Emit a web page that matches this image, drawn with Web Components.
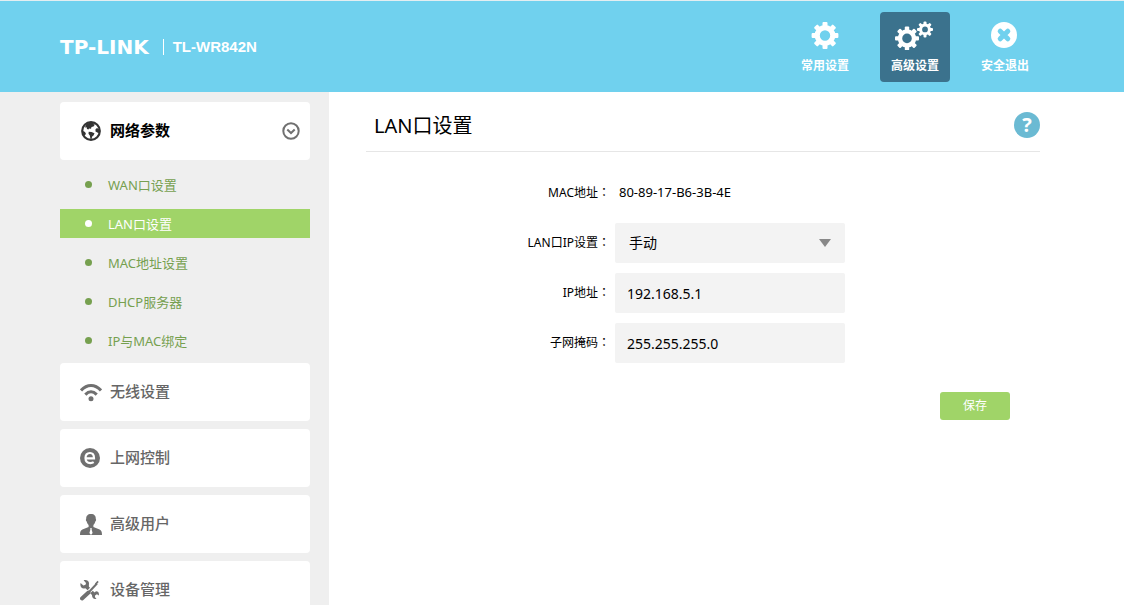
<!DOCTYPE html>
<html lang="zh-CN">
<head>
<meta charset="utf-8">
<title>TL-WR842N</title>
<style>
  html, body { margin: 0; min-height: 100%; }
  body {
    --blue: #70d1ee;
    --green: #a0d468;
    font: 12px/20px "Noto Sans", "Noto Sans CJK SC", sans-serif;
    color: #000;
    background: #fff;
  }
</style>
</head>
<body>
<router-app></router-app>

<script>
const gear = (cx, cy, outer, body, hole, tooth) => {
  const ring = (body + hole) / 2;
  const teeth = [0, 45, 90, 135, 180, 225, 270, 315].map(a =>
    `<rect x="${cx - tooth / 2}" y="${cy - outer}" width="${tooth}" height="${outer - ring}" rx="1" fill="currentColor" transform="rotate(${a} ${cx} ${cy})"/>`).join('');
  return `<circle cx="${cx}" cy="${cy}" r="${ring}" fill="none" stroke="currentColor" stroke-width="${body - hole}"/>${teeth}`;
};

const ICONS = {
  gear: [40, 30, gear(20, 15.5, 13.4, 10.4, 5.2, 5)],
  gears: [40, 30, gear(12, 18.4, 12, 9.2, 4.8, 4.4) + gear(30, 9.4, 8, 5.9, 2.9, 3)],
  exit: [40, 30, '<circle cx="19" cy="15" r="13" fill="currentColor"/><path d="M15.2 11.2l7.6 7.6M22.8 11.2l-7.6 7.6" stroke="#70d1ee" stroke-width="5" stroke-linecap="round"/>'],
  globe: [22, 22, '<circle cx="11" cy="11" r="8.8" fill="none" stroke="currentColor" stroke-width="2.2"/><path fill="currentColor" d="M6 4.500L9.500 2.500H14L13.600 4.200 15 4.600 13.500 6.600 11.500 7 11 8.800 9 8.500 8.500 9.600 7 9 6.600 7.200 5 7.400ZM15.500 9.200L17 8 19.500 9.500V13L17.800 12.800 15.500 11.500ZM3 11L5 12 6 14 4.500 15.500 2.500 13ZM8.700 11.800L11.500 12 14.500 13.200 13.500 15.500 12.200 16.500 11.500 19 10.500 19 9.800 15.500 8.500 13.800Z"/>'],
  wifi: [22, 22, '<g fill="none" stroke="currentColor" stroke-width="3"><path d="M1 9.5C7 2.8 15 2.8 21 9.5"/><path d="M5.3 13.6C9 9.8 13 9.8 16.7 13.6"/></g><circle cx="11" cy="17.8" r="2.5" fill="currentColor"/>'],
  web: [22, 22, '<circle cx="10" cy="11" r="10" fill="currentColor"/><path d="M5.5 11.3H14C14 7.8 12.4 6 10 6C7.3 6 5.5 8 5.5 11.1C5.5 14.3 7.4 16.1 10.4 16.1C11.7 16.1 12.8 15.8 13.7 15.2" fill="none" stroke="#fff" stroke-width="2.2"/>'],
  user: [22, 22, '<path fill="currentColor" d="M11 1C7.7 1 6 3 6.2 6C5.6 6.4 5.9 8.3 6.7 8.6C7 10.2 7.7 11.3 8.6 12V14L2.4 16.6C.8 17.3 0 18.6 0 22H22C22 18.6 21.2 17.3 19.6 16.6L13.4 14V12C14.3 11.3 15 10.2 15.3 8.6C16.1 8.3 16.4 6.4 15.8 6C16 3 14.3 1 11 1Z"/><path fill="#fff" d="M10 15.2h2l-.4 1.4 1 3.4-1.6 2-1.6-2 1-3.4z"/>'],
  tools: [22, 22, '<g fill="none" stroke="currentColor"><path d="M5 6.500L8.800 10M11.500 13L15 16.500" stroke-width="3.600"/><path d="M2 19.500L8.500 13.500" stroke-width="4" stroke-linecap="round"/><path d="M8.500 13.500L17 4.500" stroke-width="2"/></g><path fill="currentColor" d="M15 4.600L17.500 1.800l1.200 1.200-2.700 3zM3.600 1.300L6 3.900 5.600 5.800 3.400 6.400.6 3.900C-.3 7.800 1.600 9.600 4.200 9.400L8.800 8.200 9 4C8.800 1.800 6.200.4 3.600 1.300ZM12 15.500l4-3.300c2.500 0 3.400 2.200 2.700 4.300L17 15.300l-1.800.700-.3 2 1.600 1.900c-2.700.8-4.700-1.200-4.500-4.400Z"/>'],
};

const svg = name => {
  const [w, h, body] = ICONS[name];
  return `<svg width="${w}" height="${h}" viewBox="0 0 ${w} ${h}" aria-hidden="true">${body}</svg>`;
};

const define = (name, render) => customElements.define(name, class extends HTMLElement {
  connectedCallback() {
    if (this.shadowRoot) return;
    this.attachShadow({ mode: 'open', delegatesFocus: name === 'form-row' }).innerHTML = render(this);
  }
});

define('top-link', el => `
  <style>
    :host { display: block; }
    a {
      box-sizing: border-box; width: 70px; height: 70px; padding-top: 8px;
      display: flex; flex-direction: column; align-items: center; gap: 6px;
      border-radius: 4px; color: #fff; text-decoration: none;
      font-weight: bold; line-height: 20px;
    }
    :host([active]) a { background: #3b728d; }
    svg { display: block; }
  </style>
  <a href="#">${svg(el.getAttribute('icon'))}<slot></slot></a>`);

define('app-header', () => `
  <style>
    :host {
      display: flex; justify-content: space-between; align-items: center;
      box-sizing: border-box; height: 92px; padding: 0 84px 0 60px;
      border-top: 1px solid #e4eef1; background: var(--blue); color: #fff;
    }
    .brand { display: flex; align-items: center; gap: 14px; }
    .logo { font: bold 20px/20px "DejaVu Sans", sans-serif; }
    .model {
      padding-left: 9px; border-left: 1px solid #fff;
      font: bold 15px/16px "Liberation Sans", sans-serif;
    }
    nav { display: flex; gap: 20px; }
  </style>
  <div class="brand"><span class="logo">TP-LINK</span><span class="model">TL-WR842N</span></div>
  <nav><slot></slot></nav>`);

define('menu-card', el => `
  <style>
    :host { display: block; }
    button {
      box-sizing: border-box; width: 100%; height: 58px; padding: 0 10px 0 20px;
      display: flex; align-items: center; gap: 8px;
      border: 0; border-radius: 4px; background: #fff; color: #666;
      font: 500 15px/20px "Noto Sans", "Noto Sans CJK SC", sans-serif; text-align: left;
    }
    :host([open]) button { color: #000; font-weight: bold; }
    .icon { color: #707070; display: flex; }
    :host([open]) .icon { color: #333; }
    svg { display: block; }
    .label { flex: 1; padding-bottom: 2px; }
  </style>
  <button type="button" aria-expanded="${el.hasAttribute('open')}">
    <span class="icon">${svg(el.getAttribute('icon'))}</span>
    <span class="label"><slot></slot></span>
    ${el.hasAttribute('open') ? '<svg width="18" height="18" viewBox="0 0 18 18" fill="none" stroke="#707070" stroke-width="2" aria-hidden="true"><circle cx="9" cy="9" r="7.7"/><path d="M5.300 7.500L9 11l3.700-3.500"/></svg>' : ''}
  </button>`);

define('sub-link', () => `
  <style>
    :host { display: block; }
    a {
      display: flex; align-items: center; gap: 16px; height: 29px; padding-left: 25px;
      color: #76a04f; text-decoration: none; font-size: 13px;
    }
    a::before { content: ""; width: 7px; height: 7px; border-radius: 50%; background: currentColor; }
    :host([active]) a { background: var(--green); color: #fff; }
  </style>
  <a href="#"><slot></slot></a>`);

define('side-menu', () => `
  <style>
    :host { display: block; box-sizing: border-box; flex: none; width: 329px; padding: 10px 19px 10px 60px; background: #efefef; }
    nav { display: flex; flex-direction: column; gap: 8px; }
    .sub { display: flex; flex-direction: column; gap: 10px; padding-top: 2px; }
  </style>
  <nav>
    <menu-card icon="globe" open>网络参数</menu-card>
    <div class="sub">
      <sub-link>WAN口设置</sub-link>
      <sub-link active>LAN口设置</sub-link>
      <sub-link>MAC地址设置</sub-link>
      <sub-link>DHCP服务器</sub-link>
      <sub-link>IP与MAC绑定</sub-link>
    </div>
    <menu-card icon="wifi">无线设置</menu-card>
    <menu-card icon="web">上网控制</menu-card>
    <menu-card icon="user">高级用户</menu-card>
    <menu-card icon="tools">设备管理</menu-card>
  </nav>`);

const control = el => {
  const value = el.getAttribute('value');
  switch (el.getAttribute('type')) {
    case 'select':
      return `<select id="field"><option>${value}</option></select><svg class="arrow" width="12" height="8" viewBox="0 0 12 8" aria-hidden="true"><path d="M0 0H12L6 8Z" fill="#888"/></svg>`;
    case 'text':
      return `<input id="field" type="text" value="${value}">`;
    default:
      return `<output id="field">${value}</output>`;
  }
};

define('form-row', el => `
  <style>
    :host { display: grid; grid-template-columns: 244px minmax(0, 230px); gap: 5px; align-items: center; min-height: 40px; }
    label { text-align: right; padding-bottom: 2px; }
    .colon { font-family: "Noto Sans CJK TC", sans-serif; }
    .control { position: relative; }
    output { display: block; padding: 0 0 2px 4px; font-size: 13px; }
    input, select {
      display: block; box-sizing: border-box; width: 100%; height: 40px; margin: 0; padding: 0 12px;
      border: 0; border-radius: 2px; background: #f3f3f3; color: #000; appearance: none;
      font: 14px/20px "Noto Sans", "Noto Sans CJK SC", sans-serif;
    }
    select { padding: 0 14px; }
    .arrow { position: absolute; right: 14px; top: 16px; pointer-events: none; }
  </style>
  <label for="field"><slot></slot><span class="colon" lang="zh-TW">：</span></label>
  <div class="control">${control(el)}</div>`);

define('lan-settings', () => `
  <style>
    :host { display: block; flex: 1; min-width: 0; padding: 0 84px 20px 37px; }
    header {
      display: flex; align-items: center; justify-content: space-between;
      box-sizing: border-box; height: 60px; padding: 6px 0 0 8px; border-bottom: 1px solid #e6e6e6;
    }
    h1 { margin: 0; padding-top: 2px; font-size: 20px; line-height: 28px; font-weight: normal; }
    .help {
      width: 26px; height: 26px; padding: 0; border: 0; border-radius: 50%;
      background: #6bbad3; color: #fff; font: bold 20px/26px "Open Sans", sans-serif;
    }
    form { display: flex; flex-direction: column; gap: 10px; padding-top: 21px; }
    .save {
      align-self: flex-end; width: 70px; height: 28px; margin: 19px 30px 0 0; padding: 0;
      border: 0; border-radius: 3px; background: var(--green); color: #fff; font: inherit;
    }
  </style>
  <header><h1>LAN口设置</h1><button class="help" type="button" aria-label="帮助">?</button></header>
  <form>
    <form-row value="80-89-17-B6-3B-4E">MAC地址</form-row>
    <form-row type="select" value="手动">LAN口IP设置</form-row>
    <form-row type="text" value="192.168.5.1">IP地址</form-row>
    <form-row type="text" value="255.255.255.0">子网掩码</form-row>
    <button class="save" type="button">保存</button>
  </form>`);

define('router-app', () => `
  <style>
    :host { display: block; }
    main { display: flex; align-items: stretch; }
  </style>
  <app-header>
    <top-link icon="gear">常用设置</top-link>
    <top-link icon="gears" active>高级设置</top-link>
    <top-link icon="exit">安全退出</top-link>
  </app-header>
  <main>
    <side-menu></side-menu>
    <lan-settings></lan-settings>
  </main>`);
</script>
</body>
</html>
